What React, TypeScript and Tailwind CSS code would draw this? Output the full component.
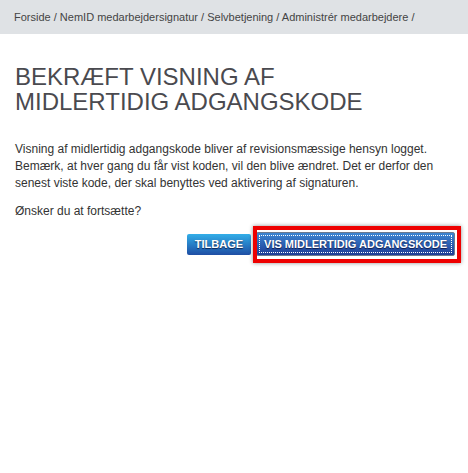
export default function App() {
  return (
    <main className="min-h-screen bg-white font-['Liberation_Sans',Arial,sans-serif]">
      {/* Breadcrumb */}
      <nav className="flex h-[34px] items-center whitespace-nowrap bg-[#dfe2e5] px-[14px] text-[11px] text-[#444]">
        Forside / NemID medarbejdersignatur / Selvbetjening / Administrér medarbejdere /
      </nav>

      <section className="pl-[15px] pr-[13px]">
        <h1 className="mt-[30px] text-[24px] leading-[25px] text-[#4a4a4f]">
          BEKRÆFT VISNING AF
          <br />
          MIDLERTIDIG ADGANGSKODE
        </h1>

        <p className="mt-[27px] text-[12px] leading-[17px] text-[#333]">
          Visning af midlertidig adgangskode bliver af revisionsmæssige hensyn logget.
          Bemærk, at hver gang du får vist koden, vil den blive ændret. Det er derfor den
          senest viste kode, der skal benyttes ved aktivering af signaturen.
        </p>
        <p className="mt-[11px] text-[12px] leading-[17px] text-[#333]">Ønsker du at fortsætte?</p>

        <div className="mt-[12px] flex items-center justify-end gap-[5px]">
          <button className="h-[21px] rounded-[2px] bg-gradient-to-b from-[#33aee8] to-[#1f4ea4] px-[8px] text-[11px] font-bold text-white [text-shadow:0_1px_1px_rgba(0,0,30,0.7)]">
            TILBAGE
          </button>
          <button className="relative h-[24px] rounded-[2px] border border-[#6b7a90] bg-gradient-to-b from-[#3d86d2] to-[#1f3c95] px-[7px] text-[11px] font-bold text-white [text-shadow:0_1px_1px_rgba(0,0,30,0.7)]">
            <span className="pointer-events-none absolute inset-[2px] border border-dotted border-white" />
            VIS MIDLERTIDIG ADGANGSKODE
            <span className="pointer-events-none absolute -top-[7px] -right-[7px] -bottom-[8px] -left-[4px] border-[4px] border-[#ee0000] shadow-[0_0_4px_rgba(0,0,0,0.45)]" />
          </button>
        </div>
      </section>
    </main>
  );
}
